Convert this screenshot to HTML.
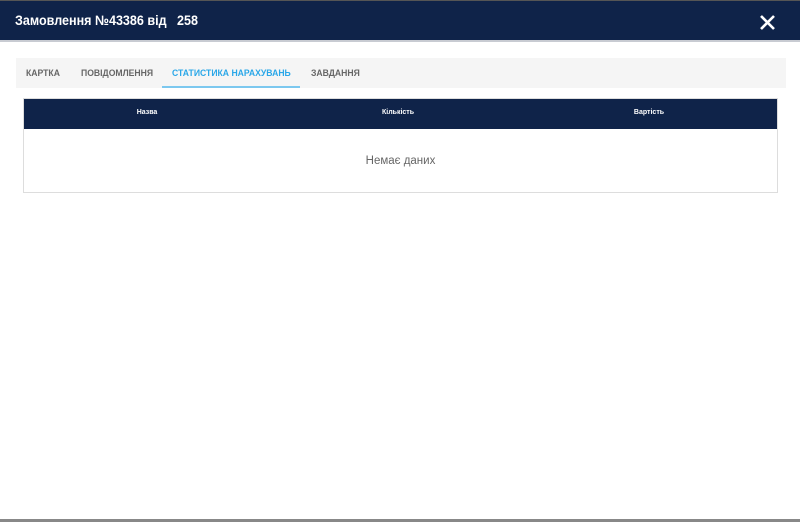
<!DOCTYPE html>
<html><head><meta charset="utf-8"><style>
html,body{margin:0;padding:0;width:800px;height:522px;overflow:hidden;background:#fff;font-family:"Liberation Sans",Arial,sans-serif;}
.hdr{position:absolute;left:0;top:0;width:800px;height:42px;background:#0f2349;border-bottom:2px solid #c8cbd2;border-top:1px solid #555;box-sizing:border-box;}
.title{position:absolute;top:12px;color:#fff;font-weight:bold;font-size:13.5px;white-space:nowrap;transform:scaleX(0.93);transform-origin:left;}
.close{position:absolute;left:759px;top:13px;}
.tabs{position:absolute;left:16px;top:58px;width:770px;height:30px;background:#f5f5f5;}
.tab{position:absolute;top:10px;font-size:9.6px;font-weight:bold;color:#666;white-space:nowrap;transform:scaleX(0.9);transform-origin:left;}
.active{color:#2aa7e8;}
.ul{position:absolute;left:162px;top:86px;width:138px;height:2px;background:#7cc8ef;}
.tbl{position:absolute;left:23px;top:98px;width:755px;height:95px;border:1px solid #ddd;box-sizing:border-box;}
.th{position:absolute;left:0;top:0;width:753px;height:30px;background:#0f2349;}
.th span{position:absolute;top:10px;color:#fff;font-size:7px;font-weight:bold;transform:translateX(-50%);}
.empty{position:absolute;left:0;width:753px;top:56px;text-align:center;color:#666;font-size:11.5px;}
.bot{position:absolute;left:0;top:519px;width:800px;height:3px;background:#888;}
</style></head><body>
<div class="hdr"><div class="title" style="left:15px">Замовлення №43386 від</div><div class="title" style="left:177px">258</div>
<svg class="close" width="17" height="17" viewBox="0 0 17 17"><path d="M2 2L15 15M15 2L2 15" stroke="#fff" stroke-width="2.6"/></svg></div>
<div class="tabs">
<span class="tab" style="left:10px">КАРТКА</span>
<span class="tab" style="left:65px">ПОВІДОМЛЕННЯ</span>
<span class="tab active" style="left:156px">СТАТИСТИКА НАРАХУВАНЬ</span>
<span class="tab" style="left:295px">ЗАВДАННЯ</span>
</div>
<div class="ul"></div>
<div class="tbl"><div class="th"><span style="left:123px">Назва</span><span style="left:374px">Кількість</span><span style="left:625px">Вартість</span></div>
<div class="empty">Немає даних</div></div>
<div class="bot"></div>
</body></html>
